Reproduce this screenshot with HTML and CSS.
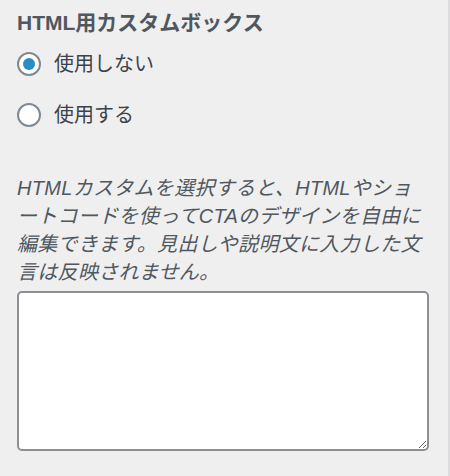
FILE: index.html
```html
<!DOCTYPE html>
<html lang="ja">
<head>
    <meta charset="UTF-8">
    <meta name="viewport" content="width=device-width, initial-scale=1.0">
    <title>HTML用カスタムボックス</title>
    <link rel="stylesheet" href="styles.css">
</head>
<body>

<div class="panel">
    <h2 class="panel-title">HTML用カスタムボックス</h2>

    <div class="radio-group">
        <label class="radio-row">
            <input type="radio" name="cta_html" value="0" checked>
            <span>使用しない</span>
        </label>
        <label class="radio-row">
            <input type="radio" name="cta_html" value="1">
            <span>使用する</span>
        </label>
    </div>

    <p class="description">HTMLカスタムを選択すると、HTMLやショートコードを使ってCTAのデザインを自由に編集できます。見出しや説明文に入力した文言は反映されません。</p>

    <textarea class="html-box"></textarea>
</div>

</body>
</html>
```

FILE: styles.css
```css
/* General Styling */
body {
    margin: 0;
    padding: 0;
    background: #efefef;
    font-family: "Liberation Sans", "Noto Sans CJK JP", sans-serif;
    color: #3c434a;
}

/* Sidebar panel */
.panel {
    width: 412px;
    min-height: 476px;
    padding: 0 19px 0 17px;
    border-right: 2px solid #dcdcde;
    box-sizing: content-box;
}

.panel-title {
    margin: 0;
    padding-top: 9px;
    font-size: 21px;
    line-height: 28px;
    font-weight: bold;
    color: #50575e;
}

/* Radio buttons */
.radio-group {
    display: flex;
    flex-direction: column;
    gap: 27px;
    margin-top: 15px;
}

.radio-row {
    display: flex;
    align-items: center;
    gap: 13px;
    height: 24px;
    font-size: 20px;
    line-height: 24px;
    color: #3c434a;
    cursor: pointer;
}

.radio-row input[type="radio"] {
    appearance: none;
    -webkit-appearance: none;
    flex: none;
    width: 24px;
    height: 24px;
    margin: 0;
    border: 2px solid #7e8993;
    border-radius: 50%;
    background: #fff;
    display: grid;
    place-items: center;
    box-sizing: border-box;
}

.radio-row input[type="radio"]:checked::before {
    content: "";
    width: 12px;
    height: 12px;
    border-radius: 50%;
    background: #2a8bc6;
}

/* Description */
.description {
    margin: 47px 0 0;
    font-size: 20px;
    line-height: 28px;
    font-style: italic;
    letter-spacing: 0.3px;
    color: #50575e;
}

/* Textarea */
.html-box {
    display: block;
    width: 100%;
    height: 160px;
    margin-top: 5px;
    box-sizing: border-box;
    border: 2px solid #8c8f94;
    border-radius: 5px;
    background: #fff;
    resize: vertical;
}
```
